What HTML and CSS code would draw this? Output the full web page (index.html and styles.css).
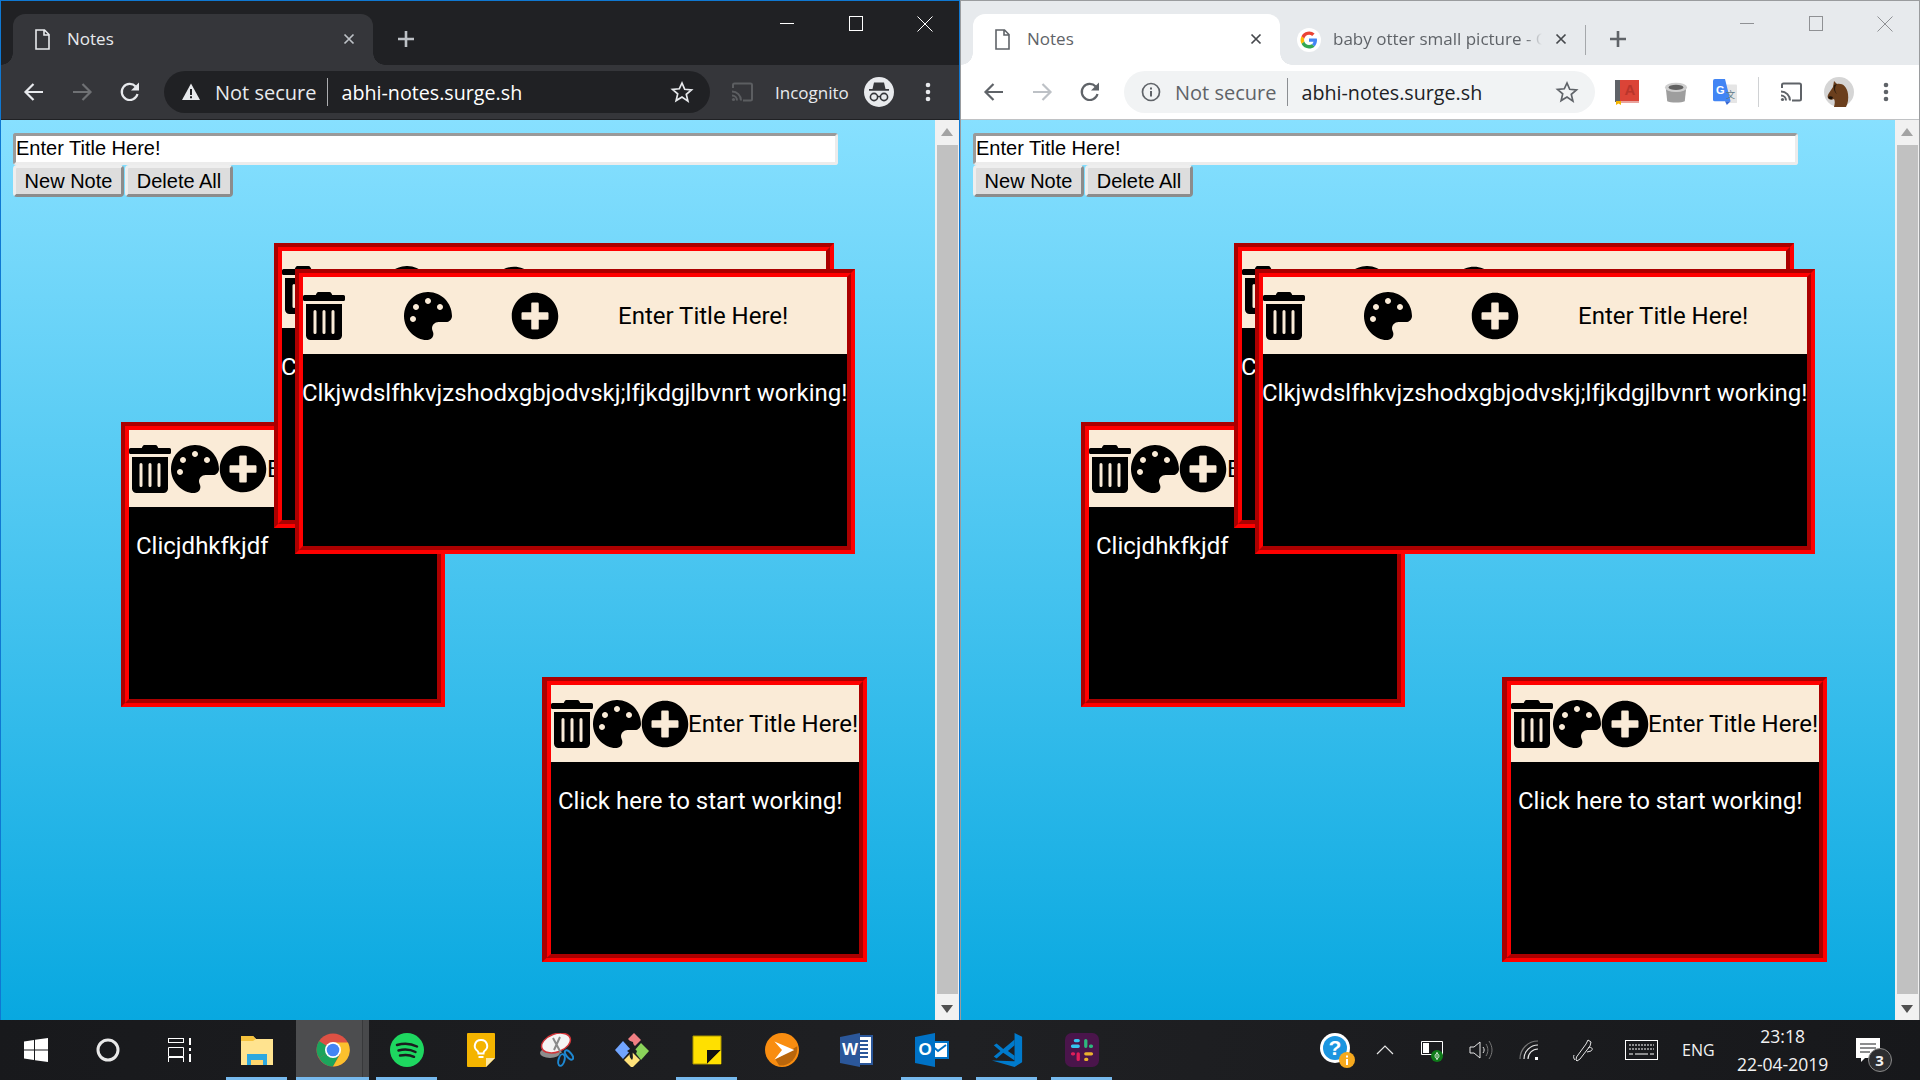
FILE: index.html
```html
<!DOCTYPE html>
<html lang="en">
  <head>
    <meta charset="UTF-8" />
    <title>Notes</title>
    <link rel="stylesheet" href="styles.css">
  </head>
  <body>
    <svg class="defs" xmlns="http://www.w3.org/2000/svg">
      <symbol id="i-trash" viewBox="0 0 448 512"><path d="M32 464a48 48 0 0 0 48 48h288a48 48 0 0 0 48-48V128H32zm272-256a16 16 0 0 1 32 0v224a16 16 0 0 1-32 0zm-96 0a16 16 0 0 1 32 0v224a16 16 0 0 1-32 0zm-96 0a16 16 0 0 1 32 0v224a16 16 0 0 1-32 0zM432 32H312l-9.4-18.7A24 24 0 0 0 281.1 0H166.8a23.72 23.72 0 0 0-21.4 13.3L136 32H16A16 16 0 0 0 0 48v32a16 16 0 0 0 16 16h416a16 16 0 0 0 16-16V48a16 16 0 0 0-16-16z"/></symbol>
      <symbol id="i-palette" viewBox="0 0 512 512"><path d="M204.3 5C104.9 24.4 24.8 104.3 5.2 203.4c-37 187 131.7 326.4 258.8 306.7 41.2-6.4 61.4-54.6 42.5-91.7-23.1-45.4 9.9-98.4 60.9-98.4h79.7c35.8 0 64.8-29.6 64.9-65.3C511.5 97.1 368.1-26.9 204.3 5zM96 320c-17.7 0-32-14.3-32-32s14.3-32 32-32 32 14.3 32 32-14.3 32-32 32zm32-128c-17.7 0-32-14.3-32-32s14.3-32 32-32 32 14.3 32 32-14.3 32-32 32zm128-64c-17.7 0-32-14.3-32-32s14.3-32 32-32 32 14.3 32 32-14.3 32-32 32zm128 64c-17.7 0-32-14.3-32-32s14.3-32 32-32 32 14.3 32 32-14.3 32-32 32z"/></symbol>
      <symbol id="i-plus" viewBox="0 0 512 512"><path d="M256 8C119 8 8 119 8 256s111 248 248 248 248-111 248-248S393 8 256 8zm144 276c0 6.6-5.4 12-12 12h-92v92c0 6.6-5.4 12-12 12h-56c-6.6 0-12-5.4-12-12v-92h-92c-6.6 0-12-5.4-12-12v-56c0-6.6 5.4-12 12-12h92v-92c0-6.6 5.4-12 12-12h56c6.6 0 12 5.4 12 12v92h92c6.6 0 12 5.4 12 12v56z"/></symbol>

      <symbol id="i-file" viewBox="0 0 15 21"><path d="M1 1h8.5L14 5.5V20H1zM9 1v5h5" fill="none" stroke="currentColor" stroke-width="1.6"/></symbol>
      <symbol id="i-close" viewBox="0 0 12 12"><path d="M1.500 1.500l9 9M10.500 1.500l-9 9" fill="none" stroke="currentColor" stroke-width="1.700"/></symbol>
      <symbol id="i-close-thin" viewBox="0 0 16 16"><path d="M.500 .500l15 15M15.500 .500l-15 15" fill="none" stroke="currentColor"/></symbol>
      <symbol id="i-new" viewBox="0 0 18 18"><path d="M9 1v16M1 9h16" fill="none" stroke="currentColor" stroke-width="2.6"/></symbol>
      <symbol id="i-back" viewBox="0 0 24 24"><path d="M22 12H5M12.500 4l-8 8 8 8" fill="none" stroke="currentColor" stroke-width="2.200"/></symbol>
      <symbol id="i-forward" viewBox="0 0 24 24"><path d="M3 12h17M12.5 4l8 8-8 8" fill="none" stroke="currentColor" stroke-width="2.2"/></symbol>
      <symbol id="i-reload" viewBox="0 0 24 24"><path d="M19.5 14a8 8 0 1 1-1.8-7.4" fill="none" stroke="currentColor" stroke-width="2.2"/><path d="M21 2.500v8h-8z" fill="currentColor"/></symbol>
      <symbol id="i-star" viewBox="0 0 24 24"><path d="M12 3l2.700 6.300 6.800.6-5.200 4.500 1.600 6.700L12 17l-5.900 3.600 1.600-6.700-5.200-4.500 6.800-.6z" fill="none" stroke="currentColor" stroke-width="1.700"/></symbol>
      <symbol id="i-warn" viewBox="0 0 20 20"><path d="M10 1.500l9 16.500H1z" fill="currentColor"/><path d="M9 7h2v6H9zM9 14.200h2v2H9z" fill="#202124"/></symbol>
      <symbol id="i-info" viewBox="0 0 20 20"><circle cx="10" cy="10" r="8.500" fill="none" stroke="currentColor" stroke-width="1.700"/><path d="M9 9h2v5.500H9zM9 5.500h2v2H9z" fill="currentColor"/></symbol>
      <symbol id="i-cast" viewBox="0 0 24 24"><path d="M3 8V5a1.500 1.500 0 0 1 1.500-1.500h16A1.500 1.500 0 0 1 22 5v14a1.500 1.500 0 0 1-1.500 1.500H13" fill="none" stroke="currentColor" stroke-width="2"/><path d="M2 11.500a9 9 0 0 1 9 9M2 15.500a5 5 0 0 1 5 5" fill="none" stroke="currentColor" stroke-width="2"/><circle cx="3.500" cy="19.500" r="1.600" fill="currentColor"/></symbol>
      <symbol id="i-dots" viewBox="0 0 6 24"><circle cx="3" cy="5" r="2.300" fill="currentColor"/><circle cx="3" cy="12" r="2.300" fill="currentColor"/><circle cx="3" cy="19" r="2.300" fill="currentColor"/></symbol>
      <symbol id="i-incognito" viewBox="0 0 30 30"><circle cx="15" cy="15" r="15" fill="#e8eaed"/><path d="M10 5.500h10l1.500 6.500h3.500v1.700H5V12h3.500z" fill="#35363a"/><circle cx="10" cy="20" r="3.600" fill="none" stroke="#35363a" stroke-width="1.600"/><circle cx="20" cy="20" r="3.600" fill="none" stroke="#35363a" stroke-width="1.600"/><path d="M13.500 19.500h3" stroke="#35363a" stroke-width="1.400"/></symbol>
      <symbol id="i-google" viewBox="0 0 24 24"><circle cx="12" cy="12" r="12" fill="#fff"/><path d="M20 12.200c0-.6-.1-1.200-.2-1.700H12v3.300h4.500a3.900 3.900 0 0 1-1.700 2.500l2.700 2.100c1.500-1.500 2.500-3.600 2.500-6.200z" fill="#4285f4"/><path d="M12 20.500c2.300 0 4.200-.8 5.500-2.100l-2.700-2.100c-.7.500-1.700.8-2.800.8-2.200 0-4-1.500-4.700-3.500l-2.800 2.200c1.400 2.800 4.300 4.700 7.500 4.700z" fill="#34a853"/><path d="M7.300 13.600a5 5 0 0 1 0-3.200L4.500 8.200a8.500 8.500 0 0 0 0 7.600z" fill="#fbbc05"/><path d="M12 6.800c1.200 0 2.300.4 3.200 1.200l2.400-2.400A8.500 8.500 0 0 0 4.500 8.200l2.800 2.200c.7-2 2.500-3.600 4.700-3.600z" fill="#ea4335"/></symbol>
    </svg>

    <div class="desktop">
      <section class="window window-dark">
        <div class="tabstrip">
          <div class="tab tab-active tab-wide">
            <svg class="tab-file"><use href="#i-file"/></svg>
            <span class="tab-title">Notes</span>
            <svg class="tab-close"><use href="#i-close"/></svg>
          </div>
          <svg class="new-tab"><use href="#i-new"/></svg>
          <div class="caption">
            <span class="caption-btn"><i class="cap-min"></i></span>
            <span class="caption-btn"><i class="cap-max"></i></span>
            <span class="caption-btn"><svg class="cap-close"><use href="#i-close-thin"/></svg></span>
          </div>
        </div>
        <div class="toolbar">
          <svg class="tool"><use href="#i-back"/></svg>
          <svg class="tool tool-off"><use href="#i-forward"/></svg>
          <svg class="tool"><use href="#i-reload"/></svg>
          <div class="omnibox omnibox-wide">
            <svg class="site-icon"><use href="#i-warn"/></svg>
            <span class="site-state">Not secure</span>
            <span class="site-sep"></span>
            <span class="site-url">abhi-notes.surge.sh</span>
            <svg class="site-star"><use href="#i-star"/></svg>
          </div>
          <svg class="tool-cast tool-dim"><use href="#i-cast"/></svg>
          <span class="incognito">Incognito</span>
          <svg class="incognito-icon"><use href="#i-incognito"/></svg>
          <svg class="tool-dots"><use href="#i-dots"/></svg>
        </div>
        <div class="viewport">
          <main class="page">
            <input class="title-input" type="text" value="Enter Title Here!" />
            <div class="page-actions">
              <button class="page-btn">New Note</button>
              <button class="page-btn page-btn-delete">Delete All</button>
            </div>

            <article class="note note-one">
              <header class="note-head">
                <svg class="icon-trash"><use href="#i-trash"/></svg>
                <svg class="icon-round"><use href="#i-palette"/></svg>
                <svg class="icon-round"><use href="#i-plus"/></svg>
                <span class="note-title">Enter Title Here!</span>
              </header>
              <p class="note-text">Clicjdhkfkjdf</p>
            </article>
            <article class="note note-wide note-two">
              <header class="note-head">
                <svg class="icon-trash"><use href="#i-trash"/></svg>
                <svg class="icon-round"><use href="#i-palette"/></svg>
                <svg class="icon-round"><use href="#i-plus"/></svg>
                <span class="note-title">Enter Title Here!</span>
              </header>
              <p class="note-text">Click here to start working!</p>
            </article>
            <article class="note note-wide note-three">
              <header class="note-head">
                <svg class="icon-trash"><use href="#i-trash"/></svg>
                <svg class="icon-round"><use href="#i-palette"/></svg>
                <svg class="icon-round"><use href="#i-plus"/></svg>
                <span class="note-title">Enter Title Here!</span>
              </header>
              <p class="note-text">Clkjwdslfhkvjzshodxgbjodvskj;lfjkdgjlbvnrt working!</p>
            </article>
            <article class="note note-four">
              <header class="note-head">
                <svg class="icon-trash"><use href="#i-trash"/></svg>
                <svg class="icon-round"><use href="#i-palette"/></svg>
                <svg class="icon-round"><use href="#i-plus"/></svg>
                <span class="note-title">Enter Title Here!</span>
              </header>
              <p class="note-text">Click here to start working!</p>
            </article>
          </main>
          <div class="scrollbar">
            <span class="arrow-up"></span>
            <span class="thumb"></span>
            <span class="arrow-down"></span>
          </div>
        </div>
      </section>

      <section class="window window-light">
        <div class="tabstrip">
          <div class="tab tab-active tab-first">
            <svg class="tab-file"><use href="#i-file"/></svg>
            <span class="tab-title">Notes</span>
            <svg class="tab-close"><use href="#i-close"/></svg>
          </div>
          <div class="tab tab-second">
            <svg class="tab-favicon"><use href="#i-google"/></svg>
            <span class="tab-title tab-title-fade">baby otter small picture - Google Search</span>
            <svg class="tab-close"><use href="#i-close"/></svg>
          </div>
          <span class="tab-sep"></span>
          <svg class="new-tab new-tab-after"><use href="#i-new"/></svg>
          <div class="caption">
            <span class="caption-btn"><i class="cap-min"></i></span>
            <span class="caption-btn"><i class="cap-max"></i></span>
            <span class="caption-btn"><svg class="cap-close"><use href="#i-close-thin"/></svg></span>
          </div>
        </div>
        <div class="toolbar">
          <svg class="tool"><use href="#i-back"/></svg>
          <svg class="tool tool-off"><use href="#i-forward"/></svg>
          <svg class="tool"><use href="#i-reload"/></svg>
          <div class="omnibox omnibox-narrow">
            <svg class="site-icon"><use href="#i-info"/></svg>
            <span class="site-state">Not secure</span>
            <span class="site-sep"></span>
            <span class="site-url">abhi-notes.surge.sh</span>
            <svg class="site-star"><use href="#i-star"/></svg>
          </div>
          <svg class="ext ext-first" viewBox="0 0 24 26">
            <path d="M0 1h5v22H0z" fill="#5f6368"/>
            <path d="M5 1h19v21H5z" fill="#db4437"/>
            <path d="M5 22h19v2H5z" fill="#e9a39c"/>
            <path d="M1 22h5v4l-2.500-1.500L1 26z" fill="#f4b400"/>
            <text x="15" y="16" class="ext-letter">A</text>
          </svg>
          <svg class="ext" viewBox="0 0 26 26">
            <path d="M2 9h22l-1.500 14c-3 2-16 2-19 0z" fill="#9e9e9e"/>
            <ellipse cx="13" cy="8" rx="12" ry="5" fill="#cfcfcf"/>
            <ellipse cx="13" cy="8" rx="8" ry="2.800" fill="#616161"/>
          </svg>
          <svg class="ext" viewBox="0 0 26 28">
            <path d="M10 6h15a1 1 0 0 1 1 1v18a1 1 0 0 1-1 1H14z" fill="#e5e5e5"/>
            <path d="M2 0h11l6 24H2a2 2 0 0 1-2-2V2a2 2 0 0 1 2-2z" fill="#4285f4"/>
            <path d="M13 24h6l-4 4z" fill="#3367d6"/>
            <text x="8" y="16" class="ext-g">G</text>
            <text x="19" y="21" class="ext-t">文</text>
          </svg>
          <span class="ext-sep"></span>
          <svg class="tool-cast"><use href="#i-cast"/></svg>
          <svg class="avatar" viewBox="0 0 30 30">
            <circle cx="15" cy="15" r="15" fill="#d5d5d5"/>
            <path d="M10 4l3 3c5-1 10 2 11 10 .600 5 0 9-2 13H10c1-4 1-6 0-8-2 1-5 1-6-1s0-3 1-5l4-6z" fill="#6b3f1d"/>
            <path d="M4 20c1-1 3-1 5 0l-1 2c-2 .500-3 0-4-2z" fill="#1b1209"/>
            <path d="M13 7c-3 3-2 8 0 10-2-1-4-5-3-9z" fill="#2a1a0c"/>
          </svg>
          <svg class="tool-dots tool-dots-after"><use href="#i-dots"/></svg>
        </div>
        <div class="viewport">
          <main class="page">
            <input class="title-input" type="text" value="Enter Title Here!" />
            <div class="page-actions">
              <button class="page-btn">New Note</button>
              <button class="page-btn page-btn-delete">Delete All</button>
            </div>

            <article class="note note-one">
              <header class="note-head">
                <svg class="icon-trash"><use href="#i-trash"/></svg>
                <svg class="icon-round"><use href="#i-palette"/></svg>
                <svg class="icon-round"><use href="#i-plus"/></svg>
                <span class="note-title">Enter Title Here!</span>
              </header>
              <p class="note-text">Clicjdhkfkjdf</p>
            </article>
            <article class="note note-wide note-two">
              <header class="note-head">
                <svg class="icon-trash"><use href="#i-trash"/></svg>
                <svg class="icon-round"><use href="#i-palette"/></svg>
                <svg class="icon-round"><use href="#i-plus"/></svg>
                <span class="note-title">Enter Title Here!</span>
              </header>
              <p class="note-text">Click here to start working!</p>
            </article>
            <article class="note note-wide note-three">
              <header class="note-head">
                <svg class="icon-trash"><use href="#i-trash"/></svg>
                <svg class="icon-round"><use href="#i-palette"/></svg>
                <svg class="icon-round"><use href="#i-plus"/></svg>
                <span class="note-title">Enter Title Here!</span>
              </header>
              <p class="note-text">Clkjwdslfhkvjzshodxgbjodvskj;lfjkdgjlbvnrt working!</p>
            </article>
            <article class="note note-four">
              <header class="note-head">
                <svg class="icon-trash"><use href="#i-trash"/></svg>
                <svg class="icon-round"><use href="#i-palette"/></svg>
                <svg class="icon-round"><use href="#i-plus"/></svg>
                <span class="note-title">Enter Title Here!</span>
              </header>
              <p class="note-text">Click here to start working!</p>
            </article>
          </main>
          <div class="scrollbar">
            <span class="arrow-up"></span>
            <span class="thumb"></span>
            <span class="arrow-down"></span>
          </div>
        </div>
      </section>
    </div>

    <footer class="taskbar">
      <span class="sys-slot">
        <svg class="sys-icon" viewBox="0 0 24 24"><path d="M0 3.500l10-1.500v9.500H0zM11 1.800L24 0v11.500H11zM0 12.500h10V22L0 20.500zM11 12.500h13V24l-13-1.800z" fill="#fff"/></svg>
      </span>
      <span class="sys-slot">
        <svg class="sys-icon" viewBox="0 0 24 24"><circle cx="12" cy="12" r="10" fill="none" stroke="#e8e8e8" stroke-width="3"/></svg>
      </span>
      <span class="sys-slot">
        <svg class="sys-icon" viewBox="0 0 24 24"><path d="M0 .500h16M0 4.500h16M.500 9.500h15v9H.500zM0 19.500h16M.500 19.500V24M15.500 19.500V24M.500 0v4.500M15.500 0v4.500" fill="none" stroke="#fff"/><path d="M22 0v7M22 10v3M22 16v8" stroke="#fff" stroke-width="2"/></svg>
      </span>

      <span class="app app-open app-first">
        <svg class="app-icon" viewBox="0 0 34 34">
          <path d="M1 3h12l3 3h17v26H1z" fill="#ffe38f"/>
          <path d="M1 3h12l3 3-3 2H1z" fill="#f5c23d"/>
          <path d="M7 32V21h20v11h-4v-5H11v5z" fill="#2ea8e0"/>
          <path d="M11 27h12v5H11z" fill="#ffd66e"/>
        </svg>
      </span>
      <span class="app app-open app-active">
        <svg class="app-icon" viewBox="0 0 34 34">
          <circle cx="17" cy="17" r="16.500" fill="#dd5144"/>
          <path d="M17 17L3 25A16.500 16.500 0 0 1 3 8z" fill="#1ca45c"/>
          <path d="M3 25a16.500 16.500 0 0 0 14 8.500L26 17H17z" fill="#1ca45c"/>
          <path d="M17 9.500h15A16.500 16.500 0 0 1 17 33.500l7-12z" fill="#fbc02d"/>
          <circle cx="17" cy="17" r="8" fill="#fff"/>
          <circle cx="17" cy="17" r="6.300" fill="#4285f4"/>
        </svg>
      </span>
      <span class="app app-open">
        <svg class="app-icon" viewBox="0 0 34 34">
          <circle cx="17" cy="17" r="17" fill="#1ed760"/>
          <path d="M7 12c7-2 14-1.500 20 1.500M8.500 17.500c6-1.500 12-1 17 1.500M10 22.500c5-1 10-.8 14 1.300" fill="none" stroke="#1b1c1f" stroke-width="2.500" stroke-linecap="round"/>
        </svg>
      </span>
      <span class="app">
        <svg class="app-icon" viewBox="0 0 34 34">
          <path d="M3 0h26a1 1 0 0 1 1 1v24l-9 9H3a1 1 0 0 1-1-1V1a1 1 0 0 1 1-1z" fill="#f4b400"/>
          <path d="M21 34v-9h9z" fill="#fce8a6"/>
          <path d="M16 7a6 6 0 0 0-3.500 11c.7.600 1 1.500 1 2.500h5c0-1 .3-1.900 1-2.500A6 6 0 0 0 16 7z" fill="none" stroke="#fff" stroke-width="2"/>
          <path d="M13.500 24h5" stroke="#fff" stroke-width="2"/>
        </svg>
      </span>
      <span class="app">
        <svg class="app-icon" viewBox="0 0 34 34">
          <ellipse cx="10" cy="20" rx="10" ry="5" fill="#8d8d8d"/>
          <ellipse cx="16" cy="10" rx="15" ry="9" transform="rotate(-20 16 10)" fill="#f4f4f4" stroke="#d13438" stroke-width="1.500"/>
          <path d="M13 5l8 15M20 4l-6 13" stroke="#8a8a8a" stroke-width="2"/>
          <ellipse cx="21.500" cy="27" rx="3" ry="6" transform="rotate(15 21.500 27)" fill="none" stroke="#1e88d2" stroke-width="2"/>
          <ellipse cx="29" cy="22" rx="2.500" ry="5.500" transform="rotate(-40 29 22)" fill="none" stroke="#1e88d2" stroke-width="2"/>
        </svg>
      </span>
      <span class="app">
        <svg class="app-icon" viewBox="0 0 34 34">
          <path d="M13 6l6-6 7 7-6 6z" fill="#f07f83"/>
          <path d="M0 17l8-9 8 9-8 9z" fill="#71a5ff"/>
          <path d="M19 18l7-8 8 8-8 9z" fill="#8bd35a"/>
          <path d="M9 27l8-8 8 8-8 8z" fill="#ffe27a"/>
          <path d="M15 8l3 1 1 6 3 3-1 3-3-2c-1 3 1 5-1 8-2-2-3-4-2-7l-3-2 3-2z" fill="#1b1c1f"/>
        </svg>
      </span>
      <span class="app app-open">
        <svg class="app-icon" viewBox="0 0 34 34">
          <path d="M3 3h28v28H3z" fill="#ffe000" stroke="#a89300"/>
          <path d="M17 31V17h14z" fill="#111"/>
          <path d="M31 17v14H17z" fill="#ffe000"/>
        </svg>
      </span>
      <span class="app">
        <svg class="app-icon" viewBox="0 0 36 36">
          <circle cx="18" cy="18" r="18" fill="#f98d10"/>
          <path d="M11 28l23-14a18 18 0 0 1-19 20.500z" fill="#b9660c"/>
          <path d="M10 9l21 9-21 10 8-10z" fill="#fff"/>
        </svg>
      </span>
      <span class="app">
        <svg class="app-icon" viewBox="0 0 34 34">
          <path d="M14 3h18v28H14z" fill="#fff" stroke="#2b579a" stroke-width="2"/>
          <path d="M18 8h10M18 12h10M18 16h10M18 20h10M18 24h10" stroke="#2b579a" stroke-width="2"/>
          <path d="M0 4l20-4v34L0 30z" fill="#2b579a"/>
          <text x="10" y="22" class="app-letter">W</text>
        </svg>
      </span>
      <span class="app app-open">
        <svg class="app-icon" viewBox="0 0 34 34">
          <path d="M14 9h19v16H14z" fill="#fff" stroke="#0072c6" stroke-width="2"/>
          <path d="M16 12l7 6 8-6" fill="none" stroke="#0072c6" stroke-width="2"/>
          <path d="M0 4l20-4v34L0 30z" fill="#0072c6"/>
          <text x="10" y="22" class="app-letter">O</text>
        </svg>
      </span>
      <span class="app app-open">
        <svg class="app-icon" viewBox="0 0 36 36">
          <path d="M26 0l8 4v27l-8 5-24-7 24 1V0z" fill="#007acc"/>
          <path d="M26 7L14 17 7 11l-3 2 7 6-7 6 3 2 7-6 12 8zM26 13v11l-7-5z" fill="#007acc" fill-rule="evenodd"/>
        </svg>
      </span>
      <span class="app app-open">
        <svg class="app-icon" viewBox="0 0 36 36">
          <rect width="36" height="36" rx="7" fill="#4a154b"/>
          <path d="M14 8h-3M8 14h6" stroke="#36c5f0" stroke-width="3.500" stroke-linecap="round"/>
          <path d="M22 8v6M28 14h-1" stroke="#2eb67d" stroke-width="3.500" stroke-linecap="round"/>
          <path d="M22 22h6M22 28h1" stroke="#ecb22e" stroke-width="3.500" stroke-linecap="round"/>
          <path d="M14 22v6M8 22h1" stroke="#e01e5a" stroke-width="3.500" stroke-linecap="round"/>
        </svg>
      </span>

      <div class="tray">
        <span class="tray-help">
          <svg class="tray-help-icon" viewBox="0 0 36 38">
            <circle cx="16" cy="17" r="15" fill="#fff"/>
            <circle cx="16" cy="17" r="12" fill="#1b95e0"/>
            <text x="16" y="24" class="help-mark">?</text>
            <circle cx="28" cy="29" r="8" fill="#f6a91e"/>
            <path d="M27 28h2v6h-2zM27 24.500h2v2h-2z" fill="#fff"/>
          </svg>
        </span>
        <svg class="tray-chevron" viewBox="0 0 18 10"><path d="M1 9l8-8 8 8" fill="none" stroke="#e6e6e6" stroke-width="1.200"/></svg>
        <svg class="tray-battery" viewBox="0 0 24 24"><path d="M.500 3.500h21v13H.500z" fill="none" stroke="#fff"/><path d="M2 5h6v10H2z" fill="#fff"/><circle cx="16" cy="18" r="6" fill="#0f7b1a"/><path d="M16 14v8M14 18c0-2 2-3 2-3s2 1 2 3-2 3-2 3-2-1-2-3z" fill="none" stroke="#fff" stroke-width=".800"/></svg>
        <svg class="tray-volume" viewBox="0 0 24 24"><path d="M1 9h4l6-5v16l-6-5H1z" fill="none" stroke="#e6e6e6"/><path d="M14 9c1.500 2 1.500 4 0 6" fill="none" stroke="#e6e6e6"/><path d="M17 6c2.500 4 2.500 8 0 12M20 3c4 6 4 12 0 18" fill="none" stroke="#777"/></svg>
        <svg class="tray-wifi" viewBox="0 0 24 24"><path d="M2 21A18 18 0 0 1 20 3" fill="none" stroke="#777" stroke-width="1.200"/><path d="M6 21A14 14 0 0 1 20 7M10 21a10 10 0 0 1 10-10" fill="none" stroke="#e6e6e6" stroke-width="1.200"/><rect x="17" y="19" width="3" height="3" fill="#fff"/></svg>
        <svg class="tray-pen" viewBox="0 0 24 24"><path d="M17 2l3 2-1 4-10 13-3 2-1-1 .500-3L15 6z" fill="none" stroke="#e6e6e6"/><path d="M17 10c3-2 6 1 3 3l-4 1M3 17c-1 2 0 4 1 5" fill="none" stroke="#e6e6e6"/></svg>
        <svg class="tray-keyboard" viewBox="0 0 33 20"><rect x=".500" y=".500" width="32" height="19" fill="none" stroke="#fff"/><path d="M4 5h25M4 9h25" stroke="#fff" stroke-dasharray="2 1"/><path d="M4 14h4M10 14h13M25 14h4" stroke="#fff"/></svg>
        <span class="tray-lang">ENG</span>
        <div class="clock">
          <span>23:18</span>
          <span>22-04-2019</span>
        </div>
        <span class="notify">
          <svg class="notify-icon" viewBox="0 0 24 24"><path d="M0 0h24v20H9l-4 4v-4H0z" fill="#fff"/><path d="M4 6h16M4 10h16M4 14h10" stroke="#1b1c1f" stroke-width="1.200"/></svg>
          <span class="notify-count">3</span>
        </span>
      </div>
    </footer>
  </body>
</html>
```

FILE: styles.css
```css
* {
  box-sizing: border-box;
}

html,
body {
  margin: 0;
  height: 100%;
  overflow: hidden;
}

body {
  display: flex;
  flex-direction: column;
  width: 1920px;
  height: 1080px;
  font-family: "Open Sans", "Noto Sans", sans-serif;
}

.defs {
  display: none;
}

.desktop {
  display: flex;
  height: 1020px;
}

/* browser window */
.window {
  display: flex;
  flex-direction: column;
  width: 960px;
  height: 1020px;
  border-style: solid;
  border-width: 1px 1px 0 1px;
}

.window-dark {
  --strip: #202124;
  --bar: #35363a;
  --ink: #e8eaed;
  --ink-soft: #bdc1c6;
  --url: #fff;
  --box: #202124;
  --caption: #fff;
  --off: #6f7174;
  --line: #202124;
  border-color: #0f78d2;
}

.window-light {
  --strip: #e7eaed;
  --bar: #fff;
  --ink: #5f6368;
  --ink-soft: #5f6368;
  --url: #202124;
  --box: #f1f3f4;
  --caption: #8f9194;
  --off: #bdc1c6;
  --line: #c0c2c4;
  border-color: #9a9c9e;
}

.tabstrip {
  display: flex;
  align-items: flex-end;
  flex: none;
  height: 64px;
  padding-left: 12px;
  background: var(--strip);
}

.tab {
  position: relative;
  display: flex;
  align-items: center;
  height: 51px;
  padding-left: 22px;
  color: var(--ink);
  border-radius: 12px 12px 0 0;
}

.tab-active {
  background: var(--bar);
}

.tab-active::before,
.tab-active::after {
  content: "";
  position: absolute;
  bottom: 0;
  width: 12px;
  height: 12px;
}

.tab-active::before {
  left: -12px;
  background: radial-gradient(circle at 0 0, transparent 11.5px, var(--bar) 12px);
}

.tab-active::after {
  right: -12px;
  background: radial-gradient(circle at 100% 0, transparent 11.5px, var(--bar) 12px);
}

.tab-wide {
  width: 360px;
}

.tab-first {
  width: 307px;
}

.tab-second {
  width: 305px;
  padding-left: 17px;
}

.tab-file {
  width: 15px;
  height: 21px;
  flex: none;
}

.tab-favicon {
  width: 24px;
  height: 24px;
  flex: none;
}

.tab-title {
  margin: 0 0 2px 17px;
  font-size: 17px;
  white-space: nowrap;
  overflow: hidden;
}

.tab-title-fade {
  width: 209px;
  margin-left: 12px;
  -webkit-mask-image: linear-gradient(to right, #000 92%, transparent);
  mask-image: linear-gradient(to right, #000 92%, transparent);
}

.tab-close {
  position: absolute;
  right: 18px;
  top: 19px;
  width: 12px;
  height: 12px;
  color: var(--ink-soft);
}

.window-light .tab-close {
  color: #45484c;
}

.new-tab {
  width: 18px;
  height: 18px;
  margin: 0 0 17px 24px;
  color: var(--ink-soft);
}

.tab-sep {
  width: 1px;
  height: 30px;
  margin-bottom: 10px;
  background: #a5a8ab;
}

.new-tab-after {
  margin-left: 23px;
}

.caption {
  display: flex;
  align-self: flex-start;
  margin-left: auto;
  color: var(--caption);
}

.caption-btn {
  display: flex;
  align-items: center;
  justify-content: center;
  width: 69px;
  height: 45px;
}

.cap-min {
  width: 14px;
  height: 1px;
  background: currentColor;
}

.cap-max {
  width: 14px;
  height: 15px;
  border: 1px solid currentColor;
}

.cap-close {
  width: 16px;
  height: 16px;
}

.toolbar {
  display: flex;
  align-items: center;
  flex: none;
  height: 55px;
  padding-left: 20px;
  color: var(--ink);
  background: var(--bar);
  border-bottom: 1px solid var(--line);
}

.tool {
  width: 24px;
  height: 24px;
  margin-right: 25px;
  flex: none;
}

.tool-off {
  margin-right: 24px;
  color: var(--off);
}

.omnibox {
  display: flex;
  align-items: center;
  height: 42px;
  margin-left: -3px;
  padding-left: 17px;
  background: var(--box);
  border-radius: 21px;
  flex: none;
}

.omnibox-wide {
  width: 546px;
}

.omnibox-narrow {
  width: 471px;
}

.site-icon {
  width: 20px;
  height: 20px;
  flex: none;
}

.site-state {
  margin-left: 14px;
  font-size: 20px;
  white-space: nowrap;
}

.site-sep {
  width: 1px;
  height: 28px;
  margin: 0 13px 0 11px;
  background: var(--ink);
  opacity: 0.7;
}

.site-url {
  color: var(--url);
  font-size: 19.7px;
  white-space: nowrap;
}

.site-star {
  width: 24px;
  height: 24px;
  margin-left: auto;
  margin-right: 16px;
  flex: none;
}

.tool-cast {
  width: 24px;
  height: 24px;
  margin-left: 20px;
  flex: none;
}

.tool-dim {
  color: #5c5e61;
}

.incognito {
  margin-left: 21px;
  font-size: 17px;
  white-space: nowrap;
}

.incognito-icon {
  width: 30px;
  height: 30px;
  margin-left: 15px;
  flex: none;
}

.tool-dots {
  width: 6px;
  height: 24px;
  margin-left: 31px;
  flex: none;
}

.ext {
  width: 24px;
  height: 26px;
  margin-left: 25px;
  flex: none;
}

.ext-first {
  margin-left: 20px;
}

.ext-letter {
  fill: #b9352b;
  font: bold 15px "Liberation Sans", sans-serif;
  text-anchor: middle;
}

.ext-g {
  fill: #fff;
  font: bold 12px "Liberation Sans", sans-serif;
  text-anchor: middle;
}

.ext-t {
  fill: #5f7c8a;
  font: 10px "Noto Sans CJK SC", sans-serif;
  text-anchor: middle;
}

.ext-sep {
  width: 1px;
  height: 30px;
  margin-left: 21px;
  background: #d0d2d4;
}

.avatar {
  width: 30px;
  height: 30px;
  margin-left: 21px;
  flex: none;
}

.tool-dots-after {
  margin-left: 29px;
}

.viewport {
  display: flex;
  flex: 1;
  min-height: 0;
}

/* the notes page */
.page {
  position: relative;
  flex: 1;
  padding: 13px 0 0 12px;
  overflow: hidden;
  background: linear-gradient(to bottom, #87e0ff, #08a8e0);
}

.title-input {
  display: block;
  width: 825px;
  height: 32px;
  padding: 0 0 2px;
  font-family: "Liberation Sans", Arial, sans-serif;
  font-size: 20px;
  color: #000;
  background: #fff;
  border: 3px solid;
  border-color: #9a9a9a #ececec #ececec #9a9a9a;
  border-radius: 3px;
}

.page-actions {
  display: flex;
  gap: 1px;
}

.page-btn {
  width: 111px;
  height: 32px;
  padding: 0;
  font-family: "Liberation Sans", Arial, sans-serif;
  font-size: 20px;
  color: #000;
  background: #ddd;
  border: 3px solid;
  border-color: #eee #8c8c8c #8c8c8c #eee;
  border-radius: 4px;
}

.page-btn-delete {
  width: 108px;
}

.note {
  position: absolute;
  height: 285px;
  color: #fff;
  font-family: Roboto, sans-serif;
  font-size: 24px;
  background: #000;
  border: 8px groove #f00;
}

.note-one {
  left: 120px;
  top: 302px;
  width: 324px;
}

.note-two {
  left: 273px;
  top: 123px;
  width: 560px;
}

.note-three {
  left: 294px;
  top: 149px;
  width: 560px;
}

.note-four {
  left: 541px;
  top: 557px;
  width: 325px;
  border-left-width: 9px;
}

.note-head {
  display: flex;
  align-items: center;
  height: 77px;
  overflow: hidden;
  color: #000;
  background: #faebd7;
}

.note-wide .note-head {
  gap: 59px;
}

.icon-trash {
  width: 42px;
  height: 48px;
  flex: none;
}

.icon-round {
  width: 48px;
  height: 48px;
  flex: none;
}

.note-title {
  flex: none;
  white-space: nowrap;
}

.note-four .note-title {
  margin-left: -1px;
}

.note-text {
  margin: 0;
  padding: 25px 0 0 7px;
  line-height: 28px;
  white-space: nowrap;
}

.note-wide .note-text {
  margin-left: -1px;
  padding-left: 0;
}

.scrollbar {
  display: flex;
  flex-direction: column;
  align-items: center;
  width: 24px;
  background: #f1f1f1;
}

.arrow-up,
.arrow-down {
  width: 0;
  height: 0;
  border-left: 6px solid transparent;
  border-right: 6px solid transparent;
}

.arrow-up {
  margin: 8px 0 9px;
  border-bottom: 8px solid #a3a3a3;
}

.arrow-down {
  margin: 11px 0 7px;
  border-top: 8px solid #505050;
}

.thumb {
  width: 21px;
  flex: 1;
  background: #c1c1c1;
}

/* windows taskbar */
.taskbar {
  display: flex;
  align-items: stretch;
  height: 60px;
  color: #f2f2f2;
  background: linear-gradient(100deg, #18191c, #1f2023 50%, #17181b);
}

.sys-slot {
  display: flex;
  align-items: center;
  justify-content: center;
  width: 72px;
}

.sys-icon {
  width: 24px;
  height: 24px;
}

.app {
  position: relative;
  display: flex;
  align-items: center;
  justify-content: center;
  width: 75px;
}

.app-first {
  margin-left: 3px;
}

.app-icon {
  width: 34px;
  height: 34px;
}

.app-open::after {
  content: "";
  position: absolute;
  left: 7px;
  right: 7px;
  bottom: 0;
  height: 3px;
  background: #76b9ed;
}

.app-active {
  border-left: 2px solid transparent;
  background: linear-gradient(to right, #4c4d4f 90%, #38393b 90%, #38393b 92%, #48494b 92%) padding-box;
}

.app-active::after {
  left: 0;
  right: 0;
}

.app-letter {
  fill: #fff;
  font: bold 17px "Liberation Sans", sans-serif;
  text-anchor: middle;
}

.tray {
  display: flex;
  align-items: center;
  flex: 1;
}

.tray-help {
  display: flex;
  margin-left: 200px;
}

.tray-help-icon {
  width: 36px;
  height: 38px;
}

.help-mark {
  fill: #fff;
  font: bold 21px "Liberation Sans", sans-serif;
  text-anchor: middle;
}

.tray-chevron {
  width: 18px;
  height: 10px;
  margin-left: 21px;
}

.tray-battery {
  width: 24px;
  height: 24px;
  margin-left: 27px;
}

.tray-volume,
.tray-wifi,
.tray-pen {
  width: 24px;
  height: 24px;
}

.tray-volume {
  margin-left: 24px;
}

.tray-wifi {
  margin-left: 25px;
}

.tray-pen {
  margin-left: 29px;
}

.tray-keyboard {
  width: 33px;
  height: 20px;
  margin-left: 30px;
}

.tray-lang {
  margin-left: 24px;
  font-size: 16px;
}

.clock {
  display: flex;
  flex-direction: column;
  align-items: center;
  gap: 6px;
  width: 96px;
  margin-left: 20px;
  font-size: 17.5px;
  line-height: 22px;
}

.notify {
  position: relative;
  display: flex;
  margin-left: 25px;
}

.notify-icon {
  width: 24px;
  height: 24px;
}

.notify-count {
  position: absolute;
  right: -12px;
  bottom: -10px;
  width: 24px;
  height: 24px;
  line-height: 22px;
  font-size: 15px;
  font-weight: 700;
  text-align: center;
  background: #2d2e30;
  border: 1px solid #8a8a8a;
  border-radius: 50%;
}
```
